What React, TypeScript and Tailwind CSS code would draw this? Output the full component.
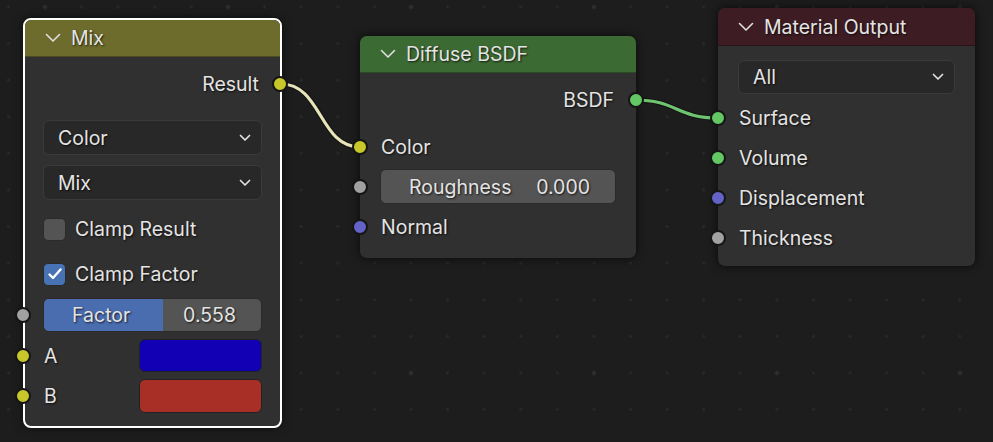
import React from "react";

const txt = "pt-[2px] [text-shadow:1px_1px_2px_rgba(0,0,0,0.75)]";

function Chevron({ className = "" }: { className?: string }) {
  return (
    <svg width="16" height="10" viewBox="0 0 16 10" className={className}>
      <polyline points="1.5,1.5 8,8 14.5,1.5" fill="none" stroke="#e0e0e0" strokeWidth="1.6" strokeLinecap="round" strokeLinejoin="round" />
    </svg>
  );
}

function SmallChevron() {
  return (
    <svg width="12" height="8" viewBox="0 0 12 8">
      <polyline points="1.5,1.5 6,6 10.5,1.5" fill="none" stroke="#e0e0e0" strokeWidth="1.7" strokeLinecap="round" strokeLinejoin="round" />
    </svg>
  );
}

function Socket({ color, side, offset }: { color: string; side: "left" | "right"; offset: number }) {
  return (
    <div
      className="absolute top-1/2 -translate-y-1/2 w-[16px] h-[16px] rounded-full border-[2px] border-[#151515]"
      style={{ backgroundColor: color, [side]: offset }}
    />
  );
}

function Dropdown({ label }: { label: string }) {
  return (
    <div className="h-full w-full rounded-[6px] bg-[#282828] border border-[#3a3a3a] flex items-center justify-between pl-[14px] pr-[10px]">
      <span className={txt}>{label}</span>
      <SmallChevron />
    </div>
  );
}

function Header({ title, bg, h }: { title: string; bg: string; h: string }) {
  return (
    <div className={`${h} ${bg} flex items-center pl-[20px] gap-[10px] border-b border-black/30`}>
      <Chevron />
      <span className={txt}>{title}</span>
    </div>
  );
}

const YEL = "#c7c729";
const GRAY = "#a1a1a1";
const PUR = "#6363c7";
const GRN = "#63c763";

export default function App() {
  return (
    <div
      className="relative w-[993px] h-[442px] overflow-hidden bg-[#1d1d1d] text-[19.5px] text-[#e4e4e4] bg-[radial-gradient(circle,#2f2f2f_1.8px,transparent_2.4px),radial-gradient(circle,#292929_1.1px,transparent_1.7px)] bg-[length:183px_183px,36.6px_36.6px] bg-[position:-46.5px_-84.5px,-9.9px_-11.3px]"
      style={{ fontFamily: "Inter, 'Noto Sans', sans-serif" }}
    >
      {/* links */}
      <svg className="absolute inset-0" width="993" height="442">
        <path d="M281,84 C322,84 319,147 360,147" fill="none" stroke="#151515" strokeWidth="5.5" />
        <path d="M281,84 C322,84 319,147 360,147" fill="none" stroke="#e6e4b8" strokeWidth="3.2" />
        <path d="M635,100 C677,100 676,118 718,118" fill="none" stroke="#151515" strokeWidth="5.5" />
        <path d="M635,100 C677,100 676,118 718,118" fill="none" stroke="#6fc46f" strokeWidth="3.2" />
      </svg>

      {/* Mix node */}
      <div className="absolute left-[23px] top-[18px] w-[259px] rounded-[8px] border-2 border-white bg-[#303030] shadow-[0_0_10px_rgba(0,0,0,0.6)]">
        <Header title="Mix" bg="bg-[#6d6c2d] rounded-t-[6px]" h="h-[37px]" />
        <div className="px-[18px] pb-[13px] flex flex-col">
          <div className="relative mt-[15px] h-[24px] flex items-center justify-end pr-[3px]">
            <span className={txt}>Result</span>
            <Socket color={YEL} side="right" offset={-26} />
          </div>
          <div className="mt-[24px] h-[35px]">
            <Dropdown label="Color" />
          </div>
          <div className="mt-[10px] h-[35px]">
            <Dropdown label="Mix" />
          </div>
          <div className="mt-[17px] h-[24px] flex items-center gap-[9px]">
            <div className="w-[23px] h-[23px] rounded-[5px] bg-[#545454] border border-[#2a2a2a]" />
            <span className={txt}>Clamp Result</span>
          </div>
          <div className="mt-[21px] h-[24px] flex items-center gap-[9px]">
            <div className="w-[23px] h-[23px] rounded-[5px] bg-[#4772b3] border border-[#2a2a2a] flex items-center justify-center">
              <svg width="16" height="14" viewBox="0 0 16 14">
                <polyline points="2.5,7.5 6,11 13.5,2.5" fill="none" stroke="#ffffff" strokeWidth="2.4" strokeLinecap="round" strokeLinejoin="round" />
              </svg>
            </div>
            <span className={txt}>Clamp Factor</span>
          </div>
          <div className="relative mt-[12px] h-[34px]">
            <div className="h-full w-full rounded-[6px] overflow-hidden bg-[#545454] border border-[#2a2a2a] flex relative">
              <div className="w-[119px] h-full bg-[#4a6db0]" />
              <div className="absolute inset-0 flex items-center justify-between pl-[28px] pr-[25px]">
                <span className={txt}>Factor</span>
                <span className={txt}>0.558</span>
              </div>
            </div>
            <Socket color={GRAY} side="left" offset={-28} />
          </div>
          <div className="relative mt-[7px] h-[33px] flex items-center justify-between">
            <span className={`pl-[1px] ${txt}`}>A</span>
            <div className="w-[123px] h-full rounded-[6px] bg-[#1200b4] border border-[#222]" />
            <Socket color={YEL} side="left" offset={-28} />
          </div>
          <div className="relative mt-[7px] h-[34px] flex items-center justify-between">
            <span className={`pl-[1px] ${txt}`}>B</span>
            <div className="w-[123px] h-full rounded-[6px] bg-[#a82f25] border border-[#222]" />
            <Socket color={YEL} side="left" offset={-28} />
          </div>
        </div>
      </div>

      {/* Diffuse BSDF */}
      <div className="absolute left-[360px] top-[36px] w-[276px] rounded-[7px] bg-[#303030] overflow-visible shadow-[0_0_10px_rgba(0,0,0,0.7)]">
        <Header title="Diffuse BSDF" bg="bg-[#3c6a33] rounded-t-[7px]" h="h-[37px]" />
        <div className="px-[20px] pb-[19px] flex flex-col">
          <div className="relative mt-[15px] h-[24px] flex items-center justify-end pr-[2px]">
            <span className={txt}>BSDF</span>
            <Socket color={GRN} side="right" offset={-28} />
          </div>
          <div className="relative mt-[23px] h-[24px] flex items-center pl-[1px]">
            <span className={txt}>Color</span>
            <Socket color={YEL} side="left" offset={-28} />
          </div>
          <div className="relative mt-[10px] h-[35px]">
            <div className="h-full w-full rounded-[6px] bg-[#545454] border border-[#2a2a2a] flex items-center justify-between pl-[28px] pr-[25px]">
              <span className={txt}>Roughness</span>
              <span className={txt}>0.000</span>
            </div>
            <Socket color={GRAY} side="left" offset={-28} />
          </div>
          <div className="relative mt-[11px] h-[24px] flex items-center pl-[1px]">
            <span className={txt}>Normal</span>
            <Socket color={PUR} side="left" offset={-28} />
          </div>
        </div>
      </div>

      {/* Material Output */}
      <div className="absolute left-[718px] top-[8px] w-[257px] rounded-[7px] bg-[#303030] shadow-[0_0_10px_rgba(0,0,0,0.7)]">
        <Header title="Material Output" bg="bg-[#3d1d23] rounded-t-[7px]" h="h-[38px]" />
        <div className="px-[20px] pb-[8px] flex flex-col">
          <div className="mt-[14px] h-[34px]">
            <Dropdown label="All" />
          </div>
          {[
            ["Surface", GRN],
            ["Volume", GRN],
            ["Displacement", PUR],
            ["Thickness", GRAY],
          ].map(([label, c], i) => (
            <div key={label} className={`relative h-[40px] flex items-center pl-[1px] ${i === 0 ? "mt-[4px]" : ""}`}>
              <span className={txt}>{label}</span>
              <Socket color={c} side="left" offset={-28} />
            </div>
          ))}
        </div>
      </div>
    </div>
  );
}
